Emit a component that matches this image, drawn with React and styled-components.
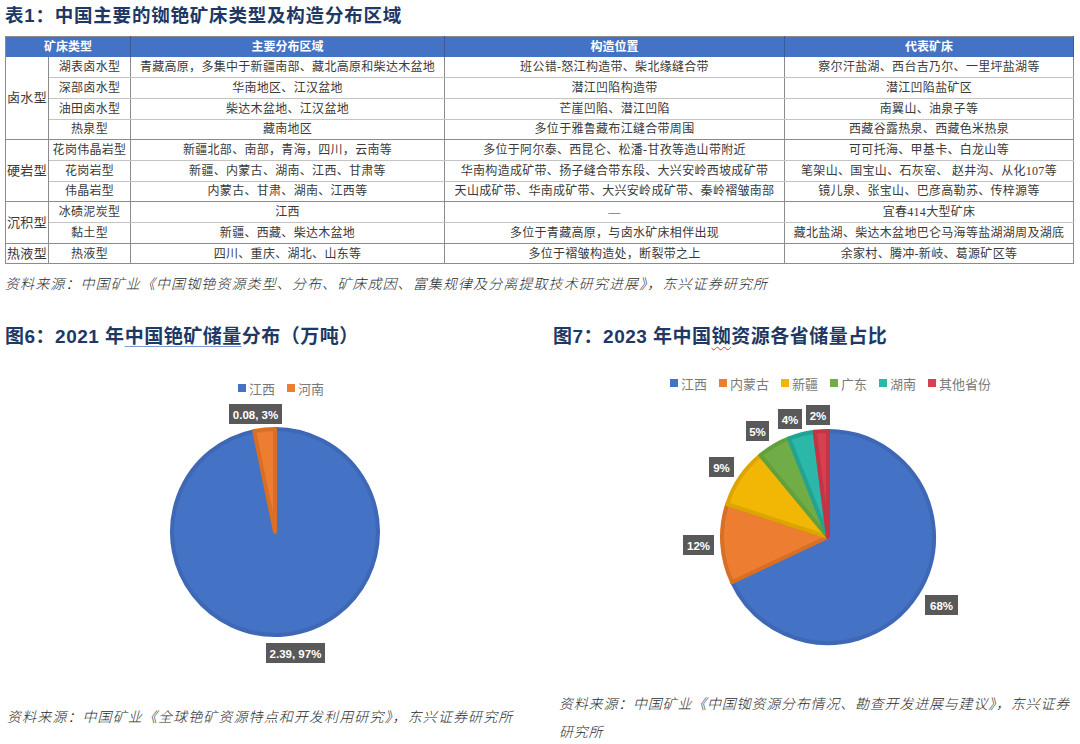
import React from 'react'
import styled, { createGlobalStyle } from 'styled-components'

const GlobalStyle = createGlobalStyle`
  html, body {
    margin: 0;
    padding: 0;
    background: #fff;
  }
  body {
    font-family: "Liberation Serif", "Noto Sans CJK SC", serif;
  }
`

const rows = [
  { group: '卤水型', span: 4, type: '湖表卤水型', area: '青藏高原，多集中于新疆南部、藏北高原和柴达木盆地', pos: '班公错-怒江构造带、柴北缘缝合带', rep: '察尔汗盐湖、西台吉乃尔、一里坪盐湖等' },
  { type: '深部卤水型', area: '华南地区、江汉盆地', pos: '潜江凹陷构造带', rep: '潜江凹陷盐矿区' },
  { type: '油田卤水型', area: '柴达木盆地、江汉盆地', pos: '芒崖凹陷、潜江凹陷', rep: '南翼山、油泉子等' },
  { type: '热泉型', area: '藏南地区', pos: '多位于雅鲁藏布江缝合带周围', rep: '西藏谷露热泉、西藏色米热泉', last: true },
  { group: '硬岩型', span: 3, type: '花岗伟晶岩型', area: '新疆北部、南部，青海，四川，云南等', pos: '多位于阿尔泰、西昆仑、松潘-甘孜等造山带附近', rep: '可可托海、甲基卡、白龙山等' },
  { type: '花岗岩型', area: '新疆、内蒙古、湖南、江西、甘肃等', pos: '华南构造成矿带、扬子缝合带东段、大兴安岭西坡成矿带', rep: '笔架山、国宝山、石灰窑、 赵井沟、从化107等' },
  { type: '伟晶岩型', area: '内蒙古、甘肃、湖南、江西等', pos: '天山成矿带、华南成矿带、大兴安岭成矿带、秦岭褶皱南部', rep: '镜儿泉、张宝山、巴彦高勒苏、传梓源等', last: true },
  { group: '沉积型', span: 2, type: '冰碛泥炭型', area: '江西', pos: '—', rep: '宜春414大型矿床' },
  { type: '黏土型', area: '新疆、西藏、柴达木盆地', pos: '多位于青藏高原，与卤水矿床相伴出现', rep: '藏北盐湖、柴达木盆地巴仑马海等盐湖湖周及湖底', last: true },
  { group: '热液型', span: 1, type: '热液型', area: '四川、重庆、湖北、山东等', pos: '多位于褶皱构造处，断裂带之上', rep: '余家村、腾冲-新岐、葛源矿区等', last: true },
]

const Page = styled.div`
  width: 1080px;
  height: 744px;
  overflow: hidden;
  box-sizing: border-box;
  display: flex;
  flex-direction: column;

  & > * {
    flex-shrink: 0;
  }
`

const Heading = styled.h1`
  margin: 0;
  padding: 4px 0 0 5px;
  height: 32px;
  box-sizing: border-box;
  font-family: "Liberation Sans", "Noto Sans CJK SC", sans-serif;
  font-weight: 700;
  font-size: 18.5px;
  line-height: 24px;
  color: #203864;
  letter-spacing: 0.8px;
`

const Table = styled.table`
  margin: 4px 0 0 5px;
  width: 1069px;
  border-collapse: collapse;
  table-layout: fixed;
  font-size: 12px;
  line-height: 16px;
  color: #3a3a3a;
  border: 1px solid #8c8c8c;
`

const Th = styled.th`
  background: #4472c4;
  color: #fff;
  font-weight: 700;
  height: 20px;
  padding: 0;
  font-size: 12px;
  border-right: 1px solid #3a5b9a;
  text-align: center;
`

const Td = styled.td`
  height: 20.7px;
  box-sizing: border-box;
  padding: 0;
  text-align: center;
  white-space: nowrap;
  letter-spacing: 0.3px;
  border-left: 1px solid #8c8c8c;
  border-right: 1px solid #8c8c8c;
  border-bottom: 1px solid ${p => (p.$strong ? '#8c8c8c' : '#c4c4c4')};
`

const GroupTd = styled(Td)`
  font-size: 13px;
  border-bottom: 1px solid #8c8c8c;
`

const Source = styled.p`
  margin: 0;
  box-sizing: border-box;
  font-family: "Noto Sans CJK SC", sans-serif;
  font-style: italic;
  font-weight: 300;
  font-size: 14px;
  letter-spacing: ${p => p.$spacing || 1.1}px;
  color: #2b2b2b;
  line-height: 28px;
  padding-left: ${p => p.$indent || 5}px;
  width: ${p => (p.$width ? `${p.$width}px` : 'auto')};
`

const TopSource = styled(Source)`
  margin-top: 5px;
`

const ChartRow = styled.div`
  margin-top: 26px;
  display: grid;
  grid-template-columns: 553px 1fr;
`

const ChartCol = styled.div`
  display: flex;
  flex-direction: column;
  padding-left: ${p => p.$pad}px;
`

const ChartTitle = styled.h2`
  margin: 0;
  font-family: "Liberation Sans", "Noto Sans CJK SC", sans-serif;
  font-weight: 700;
  font-size: 19px;
  line-height: 28px;
  letter-spacing: 0.5px;
  color: #203864;
`

const Marked = styled.span`
  text-decoration: underline;
  text-decoration-color: ${p => (p.$wavy ? '#e03030' : '#7a9ad8')};
  text-decoration-style: ${p => (p.$wavy ? 'wavy' : 'solid')};
  text-decoration-thickness: 1px;
  text-underline-offset: 3px;
`

const Legend = styled.div`
  display: flex;
  gap: 12px;
  margin-top: ${p => p.$top}px;
  padding-left: ${p => p.$left}px;
  height: 18px;
  align-items: center;
`

const LegendItem = styled.span`
  display: inline-flex;
  align-items: center;
  gap: 3px;
  font-size: 13px;
  color: #7a7a7a;
`

const Swatch = styled.i`
  width: 8px;
  height: 8px;
  background: ${p => p.$color};
`

const Figure = styled.svg`
  display: block;
  margin-top: ${p => p.$top}px;
`

const BottomSource = styled(Source)`
  margin-top: ${p => p.$top}px;
`

function pt(cx, cy, r, a) {
  const rad = (a * Math.PI) / 180
  return [cx + r * Math.sin(rad), cy - r * Math.cos(rad)]
}

function slicePath(cx, cy, r, a0, a1) {
  const [x0, y0] = pt(cx, cy, r, a0)
  const [x1, y1] = pt(cx, cy, r, a1)
  const large = a1 - a0 > 180 ? 1 : 0
  return `M${cx} ${cy} L${x0} ${y0} A${r} ${r} 0 ${large} 1 ${x1} ${y1} Z`
}

const Pie = ({ cx, cy, r, data }) => {
  let acc = 0
  const total = data.reduce((s, d) => s + d.value, 0)
  return data.map(d => {
    const a0 = (acc / total) * 360
    acc += d.value
    const a1 = (acc / total) * 360
    return (
      <path
        key={d.name}
        d={slicePath(cx, cy, r - 2, a0, a1)}
        fill={d.color}
        stroke={d.edge}
        strokeWidth="4"
        strokeLinejoin="round"
      />
    )
  })
}

const Label = ({ x, y, w, text }) => (
  <g>
    <rect x={x} y={y} width={w} height="20" fill="#595959" />
    <text
      x={x + w / 2}
      y={y + 14.5}
      textAnchor="middle"
      fill="#fff"
      fontFamily="'Liberation Sans', 'Open Sans', sans-serif"
      fontWeight="700"
      fontSize="11.5"
    >
      {text}
    </text>
  </g>
)

const cesium = [
  { name: '江西', value: 2.39, color: '#4472c4', edge: '#3e68b5' },
  { name: '河南', value: 0.08, color: '#ed7d31', edge: '#d86f25' },
]

const rubidium = [
  { name: '江西', value: 68, color: '#4472c4', edge: '#3e68b5' },
  { name: '内蒙古', value: 12, color: '#ed7d31', edge: '#d86f25' },
  { name: '新疆', value: 9, color: '#f2b705', edge: '#dca500' },
  { name: '广东', value: 5, color: '#70ad47', edge: '#62a03b' },
  { name: '湖南', value: 4, color: '#2bb8a8', edge: '#22a394' },
  { name: '其他省份', value: 2, color: '#d7404f', edge: '#c33544' },
]

export default function App() {
  return (
    <Page>
      <GlobalStyle />
      <Heading>表1：中国主要的铷铯矿床类型及构造分布区域</Heading>
      <Table>
        <colgroup>
          <col style={{ width: 43 }} />
          <col style={{ width: 82 }} />
          <col style={{ width: 314 }} />
          <col style={{ width: 340 }} />
          <col />
        </colgroup>
        <thead>
          <tr>
            <Th colSpan={2}>矿床类型</Th>
            <Th>主要分布区域</Th>
            <Th>构造位置</Th>
            <Th>代表矿床</Th>
          </tr>
        </thead>
        <tbody>
          {rows.map(r => (
            <tr key={r.type + r.area}>
              {r.group && <GroupTd rowSpan={r.span}>{r.group}</GroupTd>}
              <Td $strong={r.last}>{r.type}</Td>
              <Td $strong={r.last}>{r.area}</Td>
              <Td $strong={r.last}>{r.pos}</Td>
              <Td $strong={r.last}>{r.rep}</Td>
            </tr>
          ))}
        </tbody>
      </Table>
      <TopSource>
        资料来源：中国矿业《中国铷铯资源类型、分布、矿床成因、富集规律及分离提取技术研究进展》，东兴证券研究所
      </TopSource>

      <ChartRow>
        <ChartCol $pad={5}>
          <ChartTitle>
            图6：2021 年<Marked>中国铯矿储量</Marked>分布（万吨）
          </ChartTitle>
          <Legend $top={28} $left={233}>
            {cesium.map(d => (
              <LegendItem key={d.name}>
                <Swatch $color={d.color} />
                {d.name}
              </LegendItem>
            ))}
          </Legend>
          <Figure width="540" height="285" $top={-6}>
            <Pie cx={270} cy={141} r={105} data={cesium} />
            <Label x={224} y={13} w={53} text="0.08, 3%" />
            <Label x={261} y={252} w={59} text="2.39, 97%" />
          </Figure>
          <BottomSource $top={26} $indent={2}>
            资料来源：中国矿业《全球铯矿资源特点和开发利用研究》，东兴证券研究所
          </BottomSource>
        </ChartCol>

        <ChartCol $pad={0}>
          <ChartTitle>
            图7：2023 年中国<Marked $wavy>铷</Marked>资源各省储量占比
          </ChartTitle>
          <Legend $top={23} $left={117}>
            {rubidium.map(d => (
              <LegendItem key={d.name}>
                <Swatch $color={d.color} />
                {d.name}
              </LegendItem>
            ))}
          </Legend>
          <Figure width="527" height="285" $top={3}>
            <Pie cx={275} cy={142} r={108} data={rubidium} />
            <Label x={253} y={10} w={24} text="2%" />
            <Label x={225} y={14} w={24} text="4%" />
            <Label x={193} y={26} w={23} text="5%" />
            <Label x={156} y={62} w={25} text="9%" />
            <Label x={130} y={140} w={31} text="12%" />
            <Label x={372} y={200} w={33} text="68%" />
          </Figure>
          <BottomSource $top={9} $indent={6} $width={527} $spacing={0.8}>
            资料来源：中国矿业《中国铷资源分布情况、勘查开发进展与建议》，东兴证券研究所
          </BottomSource>
        </ChartCol>
      </ChartRow>
    </Page>
  )
}
